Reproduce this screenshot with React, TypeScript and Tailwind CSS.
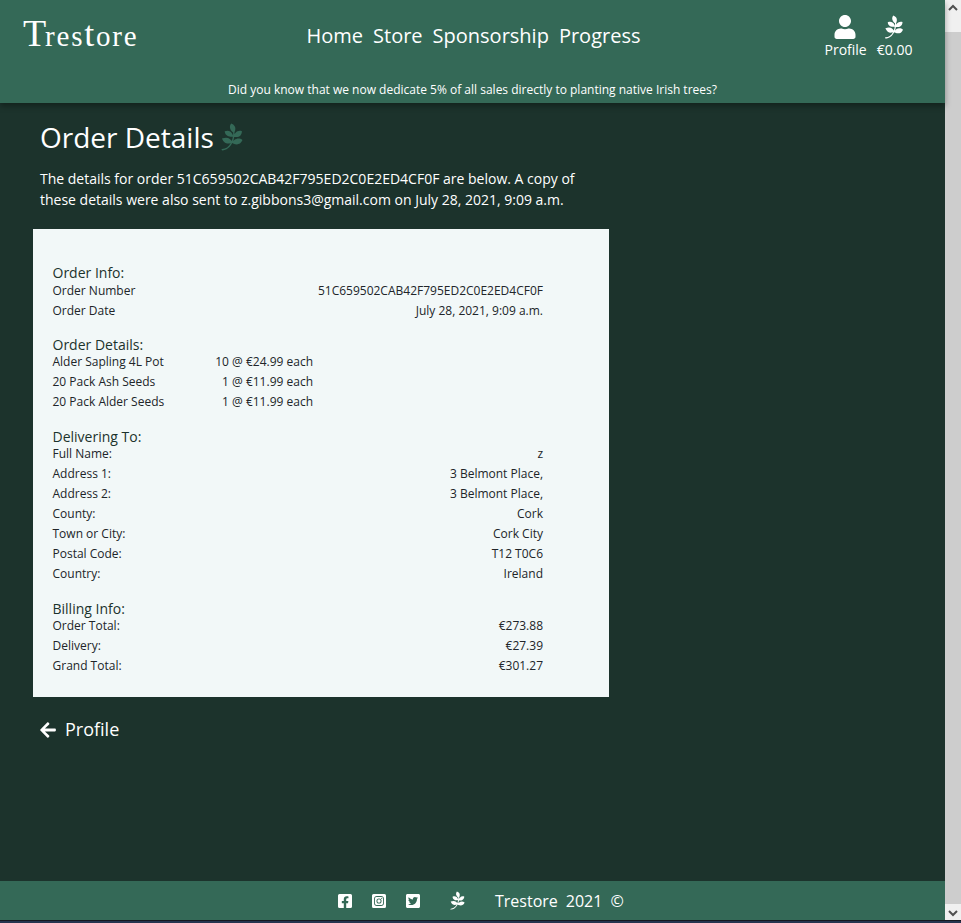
import React from "react";
import {
  FaArrowLeft,
  FaFacebookSquare,
  FaInstagramSquare,
  FaPagelines,
  FaTwitterSquare,
  FaUser,
} from "react-icons/fa";

type Row = [string, string];

function Section({ title, rows, className = "", rowsClass = "" }: { title: string; rows: Row[]; className?: string; rowsClass?: string }) {
  return (
    <section className={className}>
      <h2 className="h-[17px] text-[14px] leading-[17px] text-[#1c332c]">{title}</h2>
      <div className={rowsClass}>
        {rows.map(([label, value]) => (
          <div key={label} className="flex h-5 justify-between text-[12px] leading-[18px] whitespace-nowrap">
            <span>{label}</span>
            <span>{value}</span>
          </div>
        ))}
      </div>
    </section>
  );
}

function Header() {
  return (
    <header className="relative h-[103px] shrink-0 bg-[#346957] shadow-[0_3px_6px_rgba(0,0,0,0.35)]">
      <div className="flex h-[81px] items-start">
        <div className="flex h-[50px] w-[306.5px] items-baseline pl-[23px] pt-[11px] font-['Liberation_Serif',serif] leading-[44px]">
          <span className="w-[22px] text-[38px]">T</span>
          <span className="text-[29px] tracking-[1.8px]">
            res<span className="text-[36px]">t</span>ore
          </span>
        </div>
        <nav className="flex w-[518px] gap-[10px] pt-[21px] text-[20px] leading-[30px]">
          <a>Home</a>
          <a>Store</a>
          <a>Sponsorship</a>
          <a>Progress</a>
        </nav>
        <div className="flex gap-[10px] pt-[15px] text-[14px] leading-[21px]">
          <a className="flex flex-col items-center">
            <FaUser size={24} className="mr-px" />
            <span>Profile</span>
          </a>
          <a className="flex flex-col items-center">
            <FaPagelines size={24} className="mr-px" />
            <span>€0.00</span>
          </a>
        </div>
      </div>
      <p className="text-center text-[12px] leading-[18px]">
        Did you know that we now dedicate 5% of all sales directly to planting native Irish trees?
      </p>
    </header>
  );
}

function Scrollbar() {
  return (
    <div className="flex h-[920px] w-4 shrink-0 flex-col justify-between bg-[#cdcdcd]">
      <div className="flex h-8 justify-center bg-[#f0f0f0] pt-[4px]">
        <svg width="10" height="8" viewBox="0 0 10 8" fill="none" stroke="#505050" strokeWidth="2">
          <path d="M1 6 5 2l4 4" />
        </svg>
      </div>
      <div className="flex h-4 items-center justify-center bg-[#f0f0f0] pt-[2px]">
        <svg width="10" height="8" viewBox="0 0 10 8" fill="none" stroke="#505050" strokeWidth="2">
          <path d="M1 2l4 4 4-4" />
        </svg>
      </div>
    </div>
  );
}

export default function App() {
  return (
    <div className="h-[923px] w-[961px] overflow-hidden bg-[#26344f] font-['Open_Sans',sans-serif] text-white">
      <div className="flex h-[920px]">
        <div className="flex w-[945px] flex-col bg-[#1c332c]">
          <Header />
          <main className="flex-1 pl-[33px]">
            <h1 className="flex items-center gap-[4px] pl-[7px] pt-[13px] text-[28px] leading-[42px]">
              Order Details
              <FaPagelines size={28} className="mb-px text-[#346957]" />
            </h1>
            <p className="w-[576px] pl-[7px] pt-[10px] text-[14px] leading-[21px]">
              The details for order 51C659502CAB42F795ED2C0E2ED4CF0F are below. A copy of
              <br />
              these details were also sent to z.gibbons3@gmail.com on July 28, 2021, 9:09 a.m.
            </p>
            <div className="mt-[19px] h-[468px] w-[576px] bg-[#f2f8f8] pl-[19.5px] pr-[66px] pt-[35px] text-[#212529]">
              <Section
                title="Order Info:"
                rowsClass="pt-px"
                rows={[
                  ["Order Number", "51C659502CAB42F795ED2C0E2ED4CF0F"],
                  ["Order Date", "July 28, 2021, 9:09 a.m."],
                ]}
              />
              <Section
                title="Order Details:"
                className="mt-[14px]"
                rowsClass="w-[260.5px]"
                rows={[
                  ["Alder Sapling 4L Pot", "10 @ €24.99 each"],
                  ["20 Pack Ash Seeds", "1 @ €11.99 each"],
                  ["20 Pack Alder Seeds", "1 @ €11.99 each"],
                ]}
              />
              <Section
                title="Delivering To:"
                className="mt-[15px]"
                rows={[
                  ["Full Name:", "z"],
                  ["Address 1:", "3 Belmont Place,"],
                  ["Address 2:", "3 Belmont Place,"],
                  ["County:", "Cork"],
                  ["Town or City:", "Cork City"],
                  ["Postal Code:", "T12 T0C6"],
                  ["Country:", "Ireland"],
                ]}
              />
              <Section
                title="Billing Info:"
                className="mt-[15px]"
                rows={[
                  ["Order Total:", "€273.88"],
                  ["Delivery:", "€27.39"],
                  ["Grand Total:", "€301.27"],
                ]}
              />
            </div>
            <a className="mt-[19px] flex items-center gap-[8px] pl-[6px] text-[18px] leading-[27px]">
              <FaArrowLeft size={18} />
              Profile
            </a>
          </main>
          <footer className="flex h-[39px] shrink-0 items-center bg-[#346957] pl-[337px] text-[16px] leading-6">
            <FaFacebookSquare size={16} />
            <FaInstagramSquare size={16} className="ml-[18px]" />
            <FaTwitterSquare size={16} className="ml-[18px]" />
            <FaPagelines size={19} className="ml-[27px]" />
            <span className="ml-[28px]">Trestore</span>
            <span className="ml-[8px]">2021</span>
            <span className="ml-[8px]">©</span>
          </footer>
        </div>
        <Scrollbar />
      </div>
      <div className="h-px bg-[#16181f]" />
    </div>
  );
}
